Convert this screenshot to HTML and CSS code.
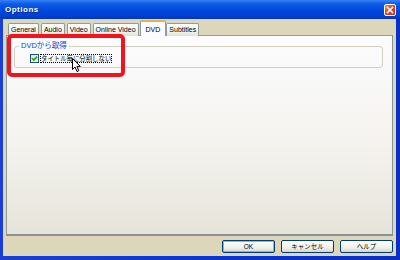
FILE: index.html
```html
<!DOCTYPE html>
<html lang="ja">
<head>
    <meta charset="UTF-8">
    <title>Options</title>
    <link rel="stylesheet" href="styles.css">
</head>
<body>
    <div class="window">
        <div class="titlebar">
            <span class="title">Options</span>
            <span class="close">
                <svg width="12" height="12" viewBox="0 0 12 12">
                    <path d="M3.5 3.5 L8.5 8.5 M8.5 3.5 L3.5 8.5" stroke="#fff" stroke-width="1.6" stroke-linecap="square"/>
                </svg>
            </span>
        </div>

        <div class="client">
            <div class="tabs">
                <span class="tab">General</span>
                <span class="tab">Audio</span>
                <span class="tab">Video</span>
                <span class="tab">Online Video</span>
                <span class="tab active">DVD</span>
                <span class="tab">Subtitles</span>
            </div>

            <div class="panel">
                <fieldset class="group">
                    <legend>DVDから取得</legend>
                    <label class="check">
                        <span class="box">
                            <svg width="7" height="7" viewBox="0 0 7 7">
                                <path d="M1 3.2 L2.8 5 L6 1.6" fill="none" stroke="#21a121" stroke-width="1.6"/>
                            </svg>
                        </span>
                        <span class="caption">タイトル毎に分割しない</span>
                    </label>
                </fieldset>
            </div>

            <div class="footer">
                <button class="btn default">OK</button>
                <button class="btn">キャンセル</button>
                <button class="btn">ヘルプ</button>
            </div>
        </div>

        <!-- red annotation -->
        <div class="highlight"></div>

        <svg class="cursor" width="10" height="15" viewBox="0 0 10 15">
            <path d="M0.5 0.5 L0.5 11.5 L3 9 L5 13.5 L6.8 12.7 L4.9 8.4 L8.3 8.4 Z" fill="#fff" stroke="#000" stroke-width="1"/>
        </svg>
    </div>
</body>
</html>
```

FILE: styles.css
```css
* {
    box-sizing: border-box;
}

body {
    margin: 0;
    width: 400px;
    height: 260px;
    overflow: hidden;
    font-family: "Liberation Sans", Arial, sans-serif;
    background: #0b3bd8;
}

.window {
    position: relative;
    width: 400px;
    height: 260px;
    display: flex;
    flex-direction: column;
    padding: 0 4px 4px 3px;
    background: linear-gradient(to right, #1a3fd6, #0a36d4 50%, #0a2fc4);
}

.titlebar {
    height: 19px;
    margin: 0 -4px 0 -3px;
    padding: 0 4px 0 5px;
    display: flex;
    align-items: center;
    justify-content: space-between;
    background: linear-gradient(to bottom, #3a80f3 0%, #0a5ce8 20%, #0047da 55%, #0040d0 85%, #0035b8 100%);
}

.title {
    color: #fff;
    font-weight: bold;
    font-size: 8px;
    letter-spacing: 0.5px;
    text-shadow: 1px 1px 0 #0a2a8a;
}

.close {
    width: 12px;
    height: 12px;
    margin-top: 1px;
    border: 1px solid #fff;
    border-radius: 2px;
    background: linear-gradient(135deg, #f08a6c, #e04520 45%, #c8300e);
    display: flex;
}

.close svg {
    margin: -1px;
}

.client {
    flex: 1;
    display: flex;
    flex-direction: column;
    padding: 1px 3px 0 3px;
    background: #dcd7ba;
}

.tabs {
    height: 16px;
    display: flex;
    align-items: flex-end;
    padding-left: 2px;
    position: relative;
    z-index: 1;
    margin-bottom: -1px;
}

.tab {
    height: 13px;
    margin-right: 2px;
    padding: 0 2px;
    font-size: 7px;
    line-height: 12px;
    color: #000;
    border: 1px solid #919b9c;
    border-bottom: none;
    border-radius: 2px 2px 0 0;
    background: linear-gradient(to bottom, #ffffff, #f3f3ef 60%, #e2e0d4);
}

.tab.active {
    height: 16px;
    margin-left: -1px;
    margin-right: 0;
    padding: 0 5px;
    line-height: 15px;
    background: #fcfcfe;
    border-top: 2px solid #f5b032;
}

.panel {
    height: 201px;
    padding: 5px 9px 0 7px;
    border: 1px solid #919b9c;
    border-right-color: #8a9394;
    border-bottom: 2px solid #8d9090;
    background: linear-gradient(to bottom, #fcfcfe, #f4f3ee 55%, #e6e4da);
}

.group {
    margin: 0;
    padding: 0 0 4px 0;
    border: 1px solid #d0d0bf;
    border-radius: 3px;
}

.group legend {
    margin-left: 4px;
    padding: 0 2px;
    font-family: "Liberation Sans", "Noto Sans CJK JP", sans-serif;
    font-size: 7.5px;
    line-height: 10px;
    color: #0046d5;
}

.check {
    margin: 2px 0 0 15px;
    height: 10px;
    display: flex;
    align-items: center;
}

.box {
    width: 9px;
    height: 9px;
    border: 1px solid #1c5180;
    background: linear-gradient(135deg, #dcdcd7, #ffffff);
    display: flex;
    align-items: center;
    justify-content: center;
}

.caption {
    margin-left: 1px;
    padding: 0 1px;
    font-family: "Noto Sans CJK JP", sans-serif;
    font-size: 6.4px;
    line-height: 9px;
    color: #000;
    outline: 1px dotted #000;
    outline-offset: -1px;
}

.footer {
    flex: 1;
    display: flex;
    justify-content: flex-end;
    align-items: flex-start;
    gap: 6px;
    padding-top: 4px;
}

.btn {
    width: 53px;
    height: 13px;
    padding: 0;
    font-family: "Liberation Sans", "Noto Sans CJK JP", sans-serif;
    font-size: 6.5px;
    line-height: 11px;
    color: #000;
    border: 1px solid #003c74;
    border-radius: 2px;
    background: linear-gradient(to bottom, #ffffff, #f0f0ea 60%, #d8d4c8);
}

.btn.default {
    box-shadow: inset 0 0 0 1px #8eb0ea;
}

.highlight {
    position: absolute;
    left: 7px;
    top: 34px;
    width: 118px;
    height: 43px;
    border: 4px solid #f2141c;
    border-radius: 5px;
    z-index: 2;
}

.cursor {
    position: absolute;
    left: 72px;
    top: 58px;
    z-index: 3;
}
```
